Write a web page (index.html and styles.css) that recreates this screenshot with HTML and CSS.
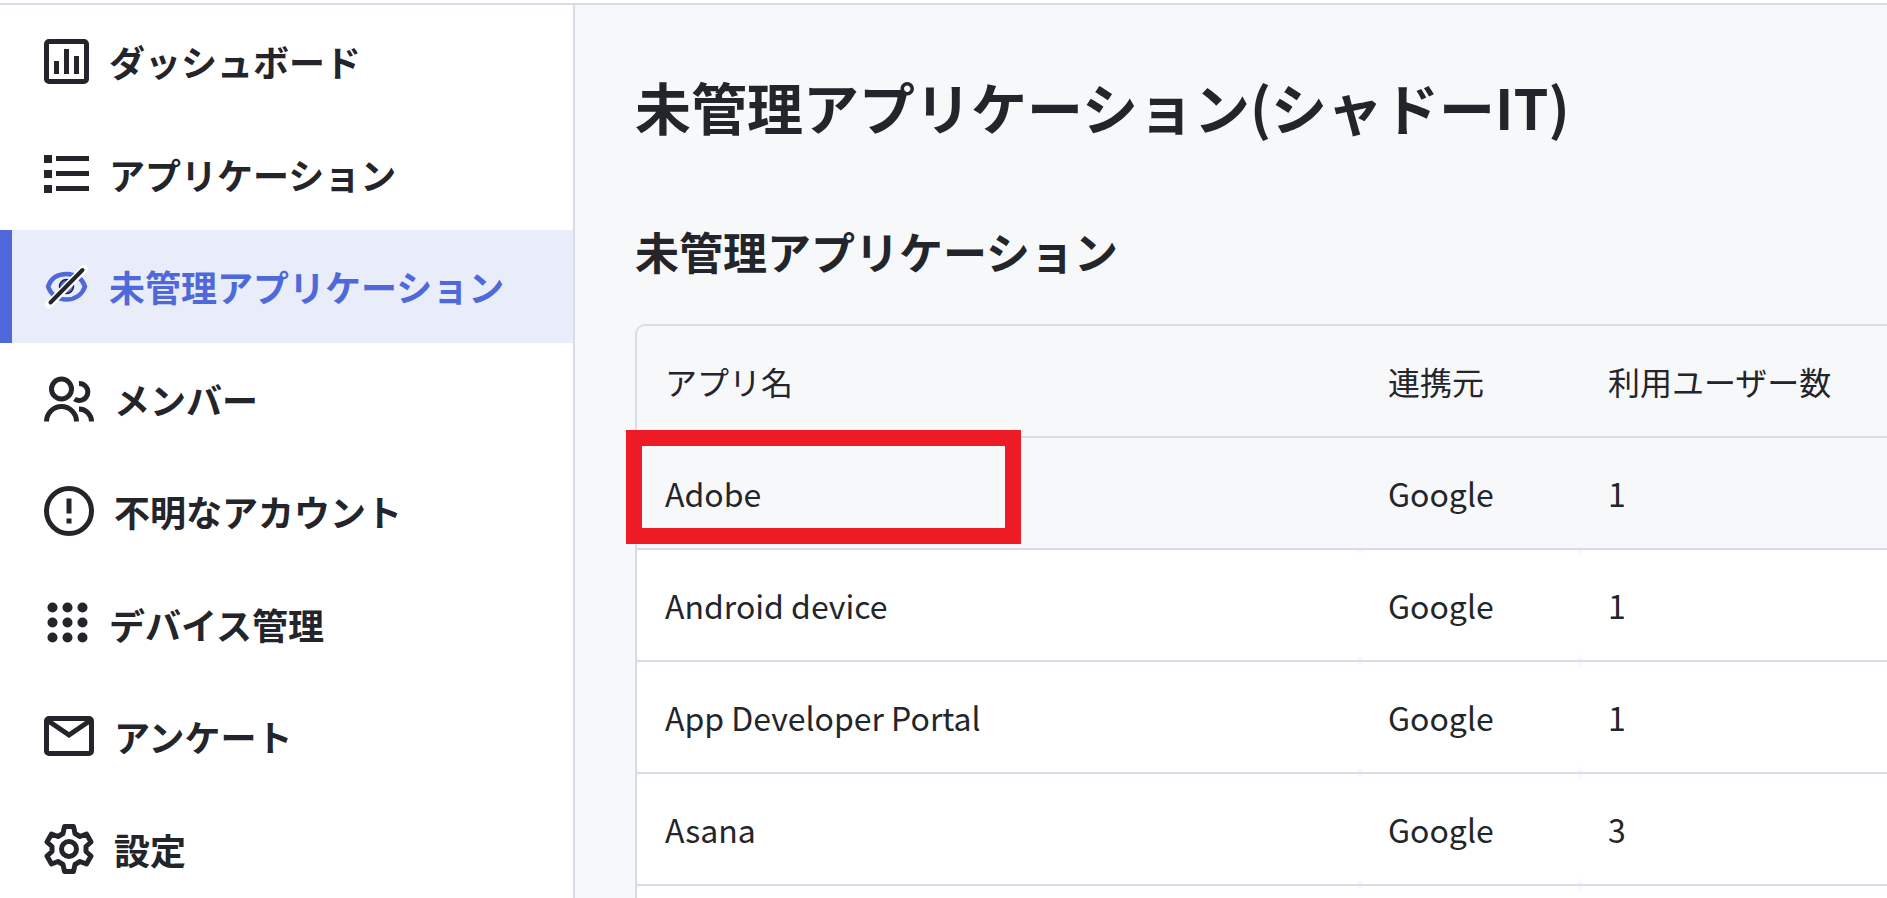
FILE: index.html
```html
<!DOCTYPE html>
<html lang="ja">
<head>
    <meta charset="UTF-8">
    <meta name="viewport" content="width=device-width, initial-scale=1.0">
    <title>未管理アプリケーション</title>
    <link rel="stylesheet" href="styles.css">
</head>
<body>
    <header class="topbar"></header>
    <div class="layout">
        <nav class="sidebar">
            <a href="#" class="nav-item">
                <svg width="45" height="45" viewBox="0 0 45 45" fill="currentColor">
                    <rect x="2.5" y="2.5" width="40" height="40" rx="2.5" fill="none" stroke="currentColor" stroke-width="5"/>
                    <path d="M10 22h5v13h-5zM20 10h5v25h-5zM30 17h5v18h-5z"/>
                </svg>
                ダッシュボード
            </a>
            <a href="#" class="nav-item">
                <svg width="45" height="45" viewBox="0 0 45 45" fill="currentColor">
                    <path d="M0 4h8v8H0zM0 19h8v8H0zM0 34h8v8H0zM12 5h33v5H12zM12 20h33v5H12zM12 35h33v5H12z"/>
                </svg>
                アプリケーション
            </a>
            <a href="#" class="nav-item active">
                <svg width="45" height="45" viewBox="0 0 45 45" fill="none" stroke-linecap="round">
                    <path d="M4 22.500C7 14 14 10 22.500 10S38 14 41 22.500C38 31 31 35.500 22.500 35.500S7 31 4 22.500z" stroke="#4f69db" stroke-width="4.500"/>
                    <circle cx="22.500" cy="22.500" r="5" stroke="#4f69db" stroke-width="4"/>
                    <circle cx="22.500" cy="22.500" r="7" stroke="#23252b" stroke-width="1.500"/>
                    <path d="M5 40.500L40 5" stroke="#fff" stroke-width="8"/>
                    <path d="M6.500 38.500L38.500 6" stroke="#23252b" stroke-width="4"/>
                </svg>
                未管理アプリケーション
            </a>
            <a href="#" class="nav-item">
                <svg width="50" height="50" viewBox="0 0 50 50" fill="none" stroke="currentColor" stroke-width="5">
                    <circle cx="17.500" cy="15" r="10"/>
                    <path d="M2.500 47.500a15 15 0 0 1 30 0M35 9.500a8.500 8.500 0 1 1-4.500 15.500M35 35a12.500 12.500 0 0 1 12.500 12.500"/>
                </svg>
                メンバー
            </a>
            <a href="#" class="nav-item">
                <svg width="50" height="50" viewBox="0 0 50 50" fill="currentColor">
                    <circle cx="25" cy="25" r="22.5" fill="none" stroke="currentColor" stroke-width="5"/>
                    <path d="M22.500 12.500h5v15h-5zM22.500 32.500h5v5h-5z"/>
                </svg>
                不明なアカウント
            </a>
            <a href="#" class="nav-item">
                <svg width="45" height="45" viewBox="0 0 45 45" fill="currentColor">
                    <circle cx="8.500" cy="6.500" r="5"/><circle cx="23.500" cy="6.500" r="5"/><circle cx="38.500" cy="6.500" r="5"/>
                    <circle cx="8.500" cy="21.500" r="5"/><circle cx="23.500" cy="21.500" r="5"/><circle cx="38.500" cy="21.500" r="5"/>
                    <circle cx="8.500" cy="36.500" r="5"/><circle cx="23.500" cy="36.500" r="5"/><circle cx="38.500" cy="36.500" r="5"/>
                </svg>
                デバイス管理
            </a>
            <a href="#" class="nav-item">
                <svg width="50" height="50" viewBox="0 0 50 50" fill="none" stroke="currentColor" stroke-width="5">
                    <rect x="2.500" y="7.500" width="45" height="35" rx="2.500"/>
                    <path d="M3 9l22 15L47 9"/>
                </svg>
                アンケート
            </a>
            <a href="#" class="nav-item">
                <svg width="50" height="50" viewBox="0 0 50 50" fill="none" stroke="currentColor" stroke-width="5" stroke-linejoin="round">
                    <path d="M20.500 2.500h9l1.500 7 5 3 6.500-2.500 4.500 8-5 4.500v5l5 4.500-4.500 8-6.500-2.500-5 3-1.500 7h-9l-1.500-7-5-3-6.500 2.500-4.500-8 5-4.500v-5l-5-4.500 4.500-8 6.500 2.500 5-3z"/>
                    <circle cx="25" cy="25" r="7.500"/>
                </svg>
                設定
            </a>
        </nav>
        <main class="content">
            <h1>未管理アプリケーション(シャドーIT)</h1>
            <h2>未管理アプリケーション</h2>
            <div class="table-wrap">
                <table>
                    <thead>
                        <tr>
                            <th>アプリ名</th>
                            <th class="col-source">連携元</th>
                            <th class="col-users">利用ユーザー数</th>
                        </tr>
                    </thead>
                    <tbody>
                        <tr class="selected">
                            <td>Adobe<span class="highlight"></span></td>
                            <td>Google</td>
                            <td>1</td>
                        </tr>
                        <tr>
                            <td>Android device</td>
                            <td>Google</td>
                            <td>1</td>
                        </tr>
                        <tr>
                            <td>App Developer Portal</td>
                            <td>Google</td>
                            <td>1</td>
                        </tr>
                        <tr>
                            <td>Asana</td>
                            <td>Google</td>
                            <td>3</td>
                        </tr>
                        <tr>
                            <td></td>
                            <td></td>
                            <td></td>
                        </tr>
                    </tbody>
                </table>
            </div>
        </main>
    </div>
</body>
</html>
```
FILE: styles.css
```css
* {
    box-sizing: border-box;
}
body {
    margin: 0;
    height: 100vh;
    overflow: hidden;
    display: flex;
    flex-direction: column;
    font-family: "Noto Sans CJK JP", sans-serif;
    color: #23252b;
    background-color: #f7f8fa;
}
.topbar {
    flex: none;
    height: 5px;
    background-color: #fff;
    border-bottom: 2px solid #d8dce6;
}
.layout {
    flex: 1;
    min-height: 0;
    display: flex;
    overflow: hidden;
}
.sidebar {
    flex: none;
    width: 575px;
    height: 900px;
    display: grid;
    grid-template-rows: repeat(8, 1fr);
    background-color: #fff;
    border-right: 2px solid #d8dce6;
}
.nav-item {
    display: flex;
    align-items: center;
    gap: 20px;
    padding-left: 32px;
    border-left: 12px solid transparent;
    font-size: 36px;
    font-weight: bold;
    color: #23252b;
    text-decoration: none;
}
.nav-item svg {
    flex: none;
}
.nav-item.active {
    color: #4f69db;
    background-color: #e9edfa;
    border-left-color: #4f69db;
}
.content {
    flex: 1;
    min-width: 0;
    padding: 61px 0 0 60px;
}
h1 {
    margin: 0;
    font-size: 56px;
    line-height: 80px;
}
h2 {
    margin: 73px 0 41px;
    font-size: 44px;
    line-height: 64px;
}
.table-wrap {
    border: 2px solid #d8dce6;
    border-right: none;
    border-radius: 10px 0 0 0;
}
table {
    width: 100%;
    table-layout: fixed;
    border-collapse: collapse;
}
tr {
    height: 112px;
    border-bottom: 2px solid #d8dce6;
}
thead tr {
    height: 111px;
}
th, td {
    padding: 0 28px;
    font-size: 32px;
    text-align: left;
}
th {
    font-weight: normal;
}
td {
    position: relative;
    background-color: #fff;
    border-radius: 8px;
}
td:last-child {
    border-radius: 8px 0 0 8px;
}
.selected td {
    background-color: #f7f8fa;
}
.col-source {
    width: 220px;
}
.col-users {
    width: 307px;
}
/* red frame over the app name */
.highlight {
    position: absolute;
    left: -11px;
    top: -8px;
    width: 395px;
    height: 114px;
    border: 16px solid #ed1c24;
}
```
